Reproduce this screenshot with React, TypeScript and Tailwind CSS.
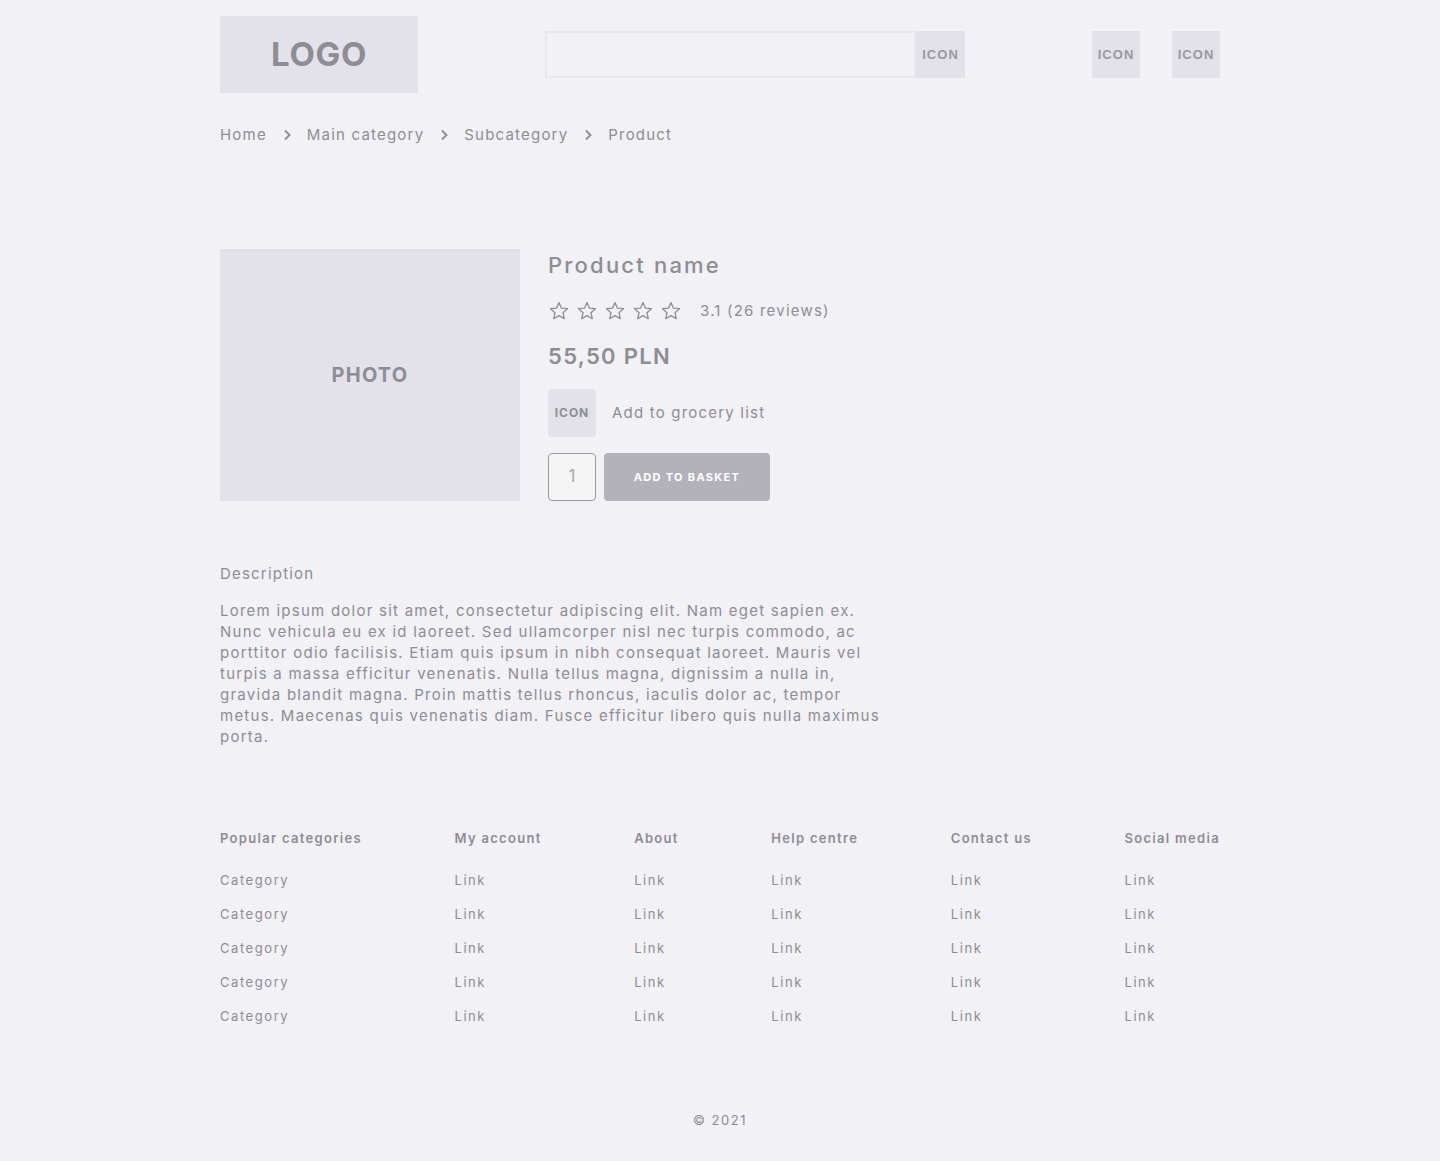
import React from "react";

const font = { fontFamily: "Inter, 'Open Sans', sans-serif" };

const Chevron = () => (
  <svg width="10" height="12" viewBox="0 0 10 12" className="mx-[15px]">
    <path d="M3 1.5 L7.5 6 L3 10.5" fill="none" stroke="#8e8d93" strokeWidth="1.8" />
  </svg>
);

const Star = () => (
  <svg width="22" height="22" viewBox="0 0 24 24">
    <path
      d="M12 2.8 L14.7 8.9 L21.3 9.5 L16.3 13.9 L17.8 20.4 L12 17 L6.2 20.4 L7.7 13.9 L2.7 9.5 L9.3 8.9 Z"
      fill="none"
      stroke="#8e8d93"
      strokeWidth="1.4"
      strokeLinejoin="round"
    />
  </svg>
);

const IconBox = ({ className = "" }: { className?: string }) => (
  <div
    className={`w-12 h-[47px] bg-[#e3e2ea] flex items-center justify-center text-[13px] font-bold tracking-[0.08em] text-[#9a99a0] ${className}`}
    style={{ fontFamily: "'Liberation Sans', Arial, sans-serif" }}
  >
    ICON
  </div>
);

const columns = [
  { title: "Popular categories", item: "Category" },
  { title: "My account", item: "Link" },
  { title: "About", item: "Link" },
  { title: "Help centre", item: "Link" },
  { title: "Contact us", item: "Link" },
  { title: "Social media", item: "Link" },
];

const lines = [
  "Lorem ipsum dolor sit amet, consectetur adipiscing elit. Nam eget sapien ex.",
  "Nunc vehicula eu ex id laoreet. Sed ullamcorper nisl nec turpis commodo, ac",
  "porttitor odio facilisis. Etiam quis ipsum in nibh consequat laoreet. Mauris vel",
  "turpis a massa efficitur venenatis. Nulla tellus magna, dignissim a nulla in,",
  "gravida blandit magna. Proin mattis tellus rhoncus, iaculis dolor ac, tempor",
  "metus. Maecenas quis venenatis diam. Fusce efficitur libero quis nulla maximus",
  "porta.",
];

export default function App() {
  return (
    <div className="min-h-[1161px] bg-[#f2f1f6] text-[#8e8d93]" style={font}>
      <div className="w-[1000px] mx-auto pt-4">
        {/* header */}
        <header className="flex items-center">
          <div className="w-[198px] h-[77px] bg-[#e3e2ea] flex items-center justify-center text-[33px] font-bold tracking-[0.02em] text-[#8e8d93]">
            LOGO
          </div>
          <div className="ml-[127px] flex h-[47px] w-[420px]">
            <div className="flex-1 border-2 border-[#e9e8ee] bg-[#f2f1f6]" />
            <IconBox className="w-[49px]" />
          </div>
          <div className="ml-auto flex gap-8">
            <IconBox />
            <IconBox />
          </div>
        </header>

        {/* breadcrumb */}
        <nav className="mt-[32px] flex items-center text-[15px] tracking-[0.08em] leading-5">
          <span>Home</span>
          <Chevron />
          <span>Main category</span>
          <Chevron />
          <span>Subcategory</span>
          <Chevron />
          <span>Product</span>
        </nav>

        {/* product */}
        <section className="mt-[104px] flex items-start gap-7">
          <div className="w-[300px] h-[252px] bg-[#e3e2ea] flex items-center justify-center text-[20px] font-bold tracking-[0.06em]">
            PHOTO
          </div>
          <div className="flex flex-col">
            <h1 className="text-[22px] font-medium tracking-[0.1em] leading-8">Product name</h1>
            <div className="mt-[18px] flex items-center h-6">
              <div className="flex gap-[6px]">
                <Star />
                <Star />
                <Star />
                <Star />
                <Star />
              </div>
              <span className="ml-[18px] text-[15px] tracking-[0.08em]">3.1 (26 reviews)</span>
            </div>
            <div className="mt-[19px] text-[22px] font-semibold tracking-[0.06em] leading-7">55,50 PLN</div>
            <div className="mt-[19px] flex items-center">
              <div className="w-12 h-12 rounded bg-[#e3e2ea] flex items-center justify-center text-[12px] font-bold tracking-[0.08em]">
                ICON
              </div>
              <span className="ml-4 text-[15px] tracking-[0.08em]">Add to grocery list</span>
            </div>
            <div className="mt-4 flex gap-2">
              <div className="w-12 h-12 rounded border border-[#9a99a0] bg-[#f5f5f6] flex items-center justify-center text-[17px] text-[#a9a8ae]">
                1
              </div>
              <button className="w-[166px] h-12 rounded bg-[#b3b1ba] text-white text-[11px] font-bold tracking-[0.12em]">
                ADD TO BASKET
              </button>
            </div>
          </div>
        </section>

        {/* description */}
        <section className="mt-[63px]">
          <h2 className="text-[15px] tracking-[0.08em] leading-5">Description</h2>
          <p className="mt-[16px] text-[15px] leading-[21px] tracking-[0.083em] whitespace-nowrap">
            {lines.map((l, i) => (
              <span key={i} className="block">
                {l}
              </span>
            ))}
          </p>
        </section>

        {/* footer */}
        <footer className="mt-[81px] flex justify-between">
          {columns.map((c) => (
            <div key={c.title} className="flex flex-col">
              <h3 className="text-[13px] font-semibold tracking-[0.1em] leading-5">{c.title}</h3>
              <ul className="mt-[22px] flex flex-col gap-[14px] text-[13px] tracking-[0.12em] leading-5">
                {[0, 1, 2, 3, 4].map((i) => (
                  <li key={i}>{c.item}</li>
                ))}
              </ul>
            </div>
          ))}
        </footer>

        <div className="mt-[84px] pb-[30px] text-center text-[13px] tracking-[0.12em] leading-5">© 2021</div>
      </div>
    </div>
  );
}
